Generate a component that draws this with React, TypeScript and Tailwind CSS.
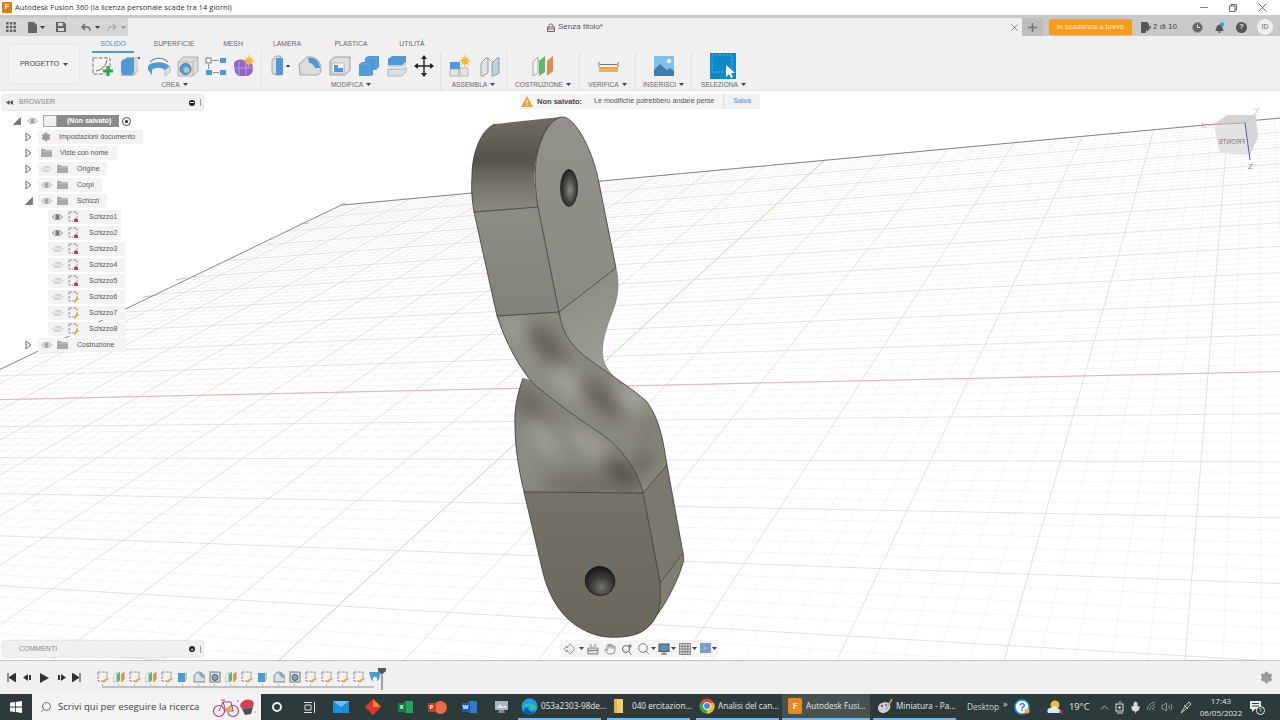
import React from "react";
import { ChevronUp, Hand, Mic, Search, Settings, Volume2, Wifi } from "lucide-react";

// ---- ground grid: a small projective map from plane (s,t) to screen
const pt = (s: number, t: number) => {
  const w = 1 + s + t;
  return `${((577 - 2298 * s + 1257 * t) / w).toFixed(1)} ${((387 + 450 * s - 236 * t) / w).toFixed(1)}`;
};
const S_MIN = -40, S_MAX = 48, T_MIN = -70, T_MAX = 55;
const DS = 0.006, DT = 0.0104;
let minorGrid = "", majorGrid = "";
for (let i = S_MIN; i <= S_MAX; i++) {
  const d = `M${pt(i * DS, T_MIN * DT)}L${pt(i * DS, T_MAX * DT)}`;
  if (i % 5 === 0) majorGrid += d;
  else minorGrid += d;
}
for (let j = T_MIN; j <= T_MAX; j++) {
  const d = `M${pt(S_MIN * DS, j * DT)}L${pt(S_MAX * DS, j * DT)}`;
  if (j % 5 === 0) majorGrid += d;
  else minorGrid += d;
}

// soft shading streaks on the twisted part: cx, cy, rx, ry, rotation, colour
const bandShade: [number, number, number, number, number, string][] = [
  [515, 330, 20, 14, 60, "#9c9b93"],
  [548, 347, 28, 11, 55, "#5f5c53"],
  [525, 362, 14, 9, 60, "#96958d"],
  [567, 383, 26, 8, 40, "#aeada5"],
  [602, 398, 28, 10, 45, "#5f5c53"],
  [632, 398, 20, 8, 45, "#b0afa7"],
  [650, 430, 14, 18, 10, "#7f7d73"],
  [640, 465, 20, 10, -40, "#6a675d"],
];
const backShade: [number, number, number, number, number, string][] = [
  [530, 405, 24, 10, 45, "#66635a"],
  [525, 462, 12, 28, 0, "#8f8e86"],
  [545, 440, 26, 8, 50, "#a6a59d"],
  [590, 445, 28, 9, 35, "#a4a39b"],
  [622, 474, 22, 11, 40, "#504d45"],
  [585, 486, 40, 7, 0, "#65625a"],
];

function Scene() {
  return (
    <svg className="absolute inset-0" width="1280" height="569" viewBox="0 91 1280 569">
      <defs>
        <linearGradient id="capSide" gradientUnits="userSpaceOnUse" x1="0" y1="118" x2="0" y2="212">
          <stop offset="0" stopColor="#6f6c64" />
          <stop offset="0.45" stopColor="#56534b" />
          <stop offset="0.72" stopColor="#78766c" />
          <stop offset="1" stopColor="#8d8b81" />
        </linearGradient>
        <linearGradient id="frontFace" gradientUnits="userSpaceOnUse" x1="0" y1="117" x2="0" y2="312">
          <stop offset="0" stopColor="#92928a" />
          <stop offset="1" stopColor="#8a8a82" />
        </linearGradient>
        <linearGradient id="flatFace" gradientUnits="userSpaceOnUse" x1="0" y1="210" x2="0" y2="316">
          <stop offset="0" stopColor="#8d8c84" />
          <stop offset="1" stopColor="#82817a" />
        </linearGradient>
        <linearGradient id="lobe" gradientUnits="userSpaceOnUse" x1="570" y1="280" x2="620" y2="380">
          <stop offset="0" stopColor="#8c8c84" />
          <stop offset="1" stopColor="#a0a098" />
        </linearGradient>
        <linearGradient id="bottomFace" gradientUnits="userSpaceOnUse" x1="0" y1="492" x2="0" y2="637">
          <stop offset="0" stopColor="#767268" />
          <stop offset="1" stopColor="#6a665b" />
        </linearGradient>
        <radialGradient id="holeTop" cx="0.55" cy="0.55" r="0.6">
          <stop offset="0" stopColor="#8a8a84" />
          <stop offset="0.5" stopColor="#4d4b46" />
          <stop offset="1" stopColor="#1b1a18" />
        </radialGradient>
        <radialGradient id="holeLow" cx="0.62" cy="0.68" r="0.7">
          <stop offset="0" stopColor="#77756f" />
          <stop offset="0.5" stopColor="#3c3b38" />
          <stop offset="1" stopColor="#161514" />
        </radialGradient>
        <filter id="soft" x="-100%" y="-100%" width="300%" height="300%">
          <feGaussianBlur stdDeviation="9" />
        </filter>
        <clipPath id="bandClip">
          <path d="M497 316L559 312C562 335 575 350 590 360C610 375 635 390 647 402C660 420 663 440 667 465L643 493C638 470 620 447 603 435C580 420 545 395 530 380C515 360 505 340 497 316Z" />
        </clipPath>
        <clipPath id="backClip">
          <path d="M523 378C517 395 514 410 515 427C515 450 520 475 524 492L643 493C638 470 620 447 603 435C580 420 545 395 530 380Z" />
        </clipPath>
      </defs>

      <path d={minorGrid} fill="none" stroke="#ebebeb" strokeWidth="0.5" />
      <path d={majorGrid} fill="none" stroke="#d6d6d6" strokeWidth="0.7" />
      <path d={`M${pt(S_MIN * DS, 0)}L${pt(S_MAX * DS, 0)}`} stroke="#eab4b4" strokeWidth="1" />
      <path d={`M${pt(0, T_MIN * DT)}L${pt(0, T_MAX * DT)}`} stroke="#bde3b5" strokeWidth="1" />
      <path d={`M${pt(S_MAX * DS, T_MIN * DT)}L${pt(S_MAX * DS, T_MAX * DT)}L${pt(S_MIN * DS, T_MAX * DT)}`} fill="none" stroke="#7d7d7d" strokeWidth="0.9" />
      <g stroke="#999" strokeWidth="0.6">
        <path d="M143 297L157 295M176 280L186 278M300 224L309 223M340 204L346 203" />
      </g>

      {/* lower back surface */}
      <path d="M523 378C517 395 514 410 515 427C515 450 520 475 524 492L643 493C638 470 620 447 603 435C580 420 545 395 530 380Z" fill="#85847b" />
      <g clipPath="url(#backClip)">
        {backShade.map(([cx, cy, rx, ry, r, c], i) => (
          <ellipse key={i} cx={cx} cy={cy} rx={rx} ry={ry} fill={c} filter="url(#soft)" transform={`rotate(${r} ${cx} ${cy})`} />
        ))}
      </g>

      {/* twist band */}
      <path d="M497 316L559 312C562 335 575 350 590 360C610 375 635 390 647 402C660 420 663 440 667 465L643 493C638 470 620 447 603 435C580 420 545 395 530 380C515 360 505 340 497 316Z" fill="#8a8980" />
      <g clipPath="url(#bandClip)">
        {bandShade.map(([cx, cy, rx, ry, r, c], i) => (
          <ellipse key={i} cx={cx} cy={cy} rx={rx} ry={ry} fill={c} filter="url(#soft)" transform={`rotate(${r} ${cx} ${cy})`} />
        ))}
      </g>

      {/* upper right lobe */}
      <path d="M559 312L616 268C620 285 618 300 610 318C604 335 600 350 604 362C608 372 615 378 622 384C612 376 600 368 590 360C575 350 562 335 559 312Z" fill="url(#lobe)" />

      {/* top piece */}
      <path d="M495 124C480 130 472 155 472 175C471 190 472 200 474 212L538 207C535 190 534 180 535 168C537 145 548 122 561 117Z" fill="url(#capSide)" />
      <path d="M561 117C575 115 592 150 598 178L616 268L559 312L538 207C534 185 535 165 537 155C541 135 550 120 561 117Z" fill="url(#frontFace)" />
      <path d="M474 212L538 207L559 312L497 316Z" fill="url(#flatFace)" />
      <ellipse cx="569" cy="188" rx="8.5" ry="18.5" fill="url(#holeTop)" stroke="#1c1b19" strokeWidth="0.7" />

      {/* bottom piece */}
      <path d="M524 492L643 493L660 582C661 600 660 608 657 615C652 625 645 631 637 634C625 638 610 638 600 636C575 630 553 612 543 573Z" fill="url(#bottomFace)" />
      <path d="M643 493L667 465L683 553L660 583Z" fill="#7b786e" />
      <path d="M683 553C684 558 684 560 683 563C678 580 668 600 657 615C660 608 661 600 660 583Z" fill="#807d72" />
      <ellipse cx="600" cy="581" rx="15" ry="14.5" fill="url(#holeLow)" stroke="#1a1917" strokeWidth="0.7" transform="rotate(20 600 581)" />

      {/* edges */}
      <g fill="none" stroke="#2a2924" strokeWidth="0.7">
        <path d="M561 117C575 115 592 150 598 178L616 268" />
        <path d="M561 117C550 120 541 135 537 155C535 165 534 185 538 207L559 312" />
        <path d="M474 212L538 207M497 316L559 312L616 268" />
        <path d="M495 124C480 130 472 155 472 175C471 190 472 200 474 212L497 316C505 340 515 360 530 380C545 395 580 420 603 435C620 447 638 470 643 493" />
        <path d="M559 312C562 335 575 350 590 360C610 375 635 390 647 402C660 420 663 440 667 465L683 553" />
        <path d="M616 268C620 285 618 300 610 318C604 335 600 350 604 362C608 372 615 378 622 384" strokeWidth="0.5" stroke="#66655c" />
        <path d="M523 378C517 395 514 410 515 427C515 450 520 475 524 492L543 573C553 612 575 630 600 636C610 638 625 638 637 634C645 631 652 625 657 615C660 608 661 600 660 582L643 493L524 492" />
        <path d="M643 493L667 465M660 583L683 553C684 558 684 560 683 563C678 580 668 600 657 615" />
      </g>

      {/* view cube */}
      <path d="M1213 125L1227 115L1256 115L1245 123Z" fill="#d2d2d2" />
      <path d="M1214 127L1245 123L1250 155L1220 153Z" fill="#e2e2e2" />
      <path d="M1245 123L1256 115L1258 137L1250 155Z" fill="#d6d6d6" />
      <text transform="translate(1245 144) scale(-1 1)" fontSize="6.5" fill="#777" fontFamily="Liberation Sans, sans-serif">FRONTE</text>
      <path d="M1208 125L1245 123" stroke="#e58f8f" strokeWidth="1" />
      <path d="M1245 123L1256 113" stroke="#9fdc98" strokeWidth="1" />
      <path d="M1245 123L1250 160" stroke="#5a5ab8" strokeWidth="1" />
      <text x="1201" y="128" fontSize="8" fill="#e58f8f" fontFamily="Liberation Sans, sans-serif">X</text>
      <text x="1254" y="113" fontSize="8" fill="#9fdc98" fontFamily="Liberation Sans, sans-serif">Y</text>
      <text x="1248" y="169" fontSize="8" fill="#7a7ac8" fontFamily="Liberation Sans, sans-serif">Z</text>
    </svg>
  );
}

// ---- ribbon icons
const Ico = ({ w = 22, h = 22, children }: { w?: number; h?: number; children: React.ReactNode }) => (
  <svg width={w} height={h} viewBox={`0 0 ${w} ${h}`} className="shrink-0">
    {children}
  </svg>
);

const SketchIcon = () => (
  <Ico>
    <path d="M2 3H19V17M2 3V19H14" fill="#f6f6f6" stroke="#777" strokeWidth="1" strokeDasharray="4 1.5" />
    <path d="M5 16C11 15 15 11 16 5" fill="none" stroke="#666" strokeWidth="1" />
    <path d="M17 11V21M12 16H22" stroke="#2fa84f" strokeWidth="3.2" />
  </Ico>
);
const ExtrudeIcon = () => (
  <Ico>
    <path d="M2 7L8 2H19V16L15 21H2Z" fill="#b5b5b5" />
    <path d="M2 7C2 5 7 3 12 3H15V17L12 20H4C2 18 2 16 2 14Z" fill="#4f9ad6" />
    <path d="M15 3L19 2V15L15 19Z" fill="#d8d8d8" />
    <circle cx="20" cy="3" r="1" fill="#333" />
  </Ico>
);
const RevolveIcon = () => (
  <Ico w={24}>
    <path d="M1 11C5 6 18 6 22 11V16L18 20V15C14 12 8 12 5 15V20L1 15Z" fill="#4f9ad6" />
    <path d="M18 15L23 11V17L18 21Z" fill="#e4e4e4" stroke="#888" strokeWidth="0.5" />
    <path d="M3 7C8 2 16 2 21 7" fill="none" stroke="#666" strokeWidth="1" />
  </Ico>
);
const HoleIcon = () => (
  <Ico>
    <path d="M1 7L6 2H21V16L16 21H1Z" fill="#dcdcdc" stroke="#999" strokeWidth="0.7" />
    <path d="M16 21V7H1M16 7L21 2" fill="none" stroke="#aaa" strokeWidth="0.7" />
    <circle cx="8.5" cy="14" r="5.5" fill="#4f9ad6" stroke="#777" />
    <circle cx="9.5" cy="15" r="3" fill="#9cc7e8" />
  </Ico>
);
const PatternIcon = () => (
  <Ico>
    <rect x="1" y="3" width="5" height="5" fill="#fff" stroke="#777" />
    <rect x="15" y="3" width="6" height="5" fill="#4f9ad6" />
    <rect x="1" y="15" width="6" height="5" fill="#4f9ad6" />
    <rect x="15" y="15" width="6" height="5" fill="#4f9ad6" />
    <path d="M7 5.5H14M3.5 9V14M8 17.5H14" stroke="#777" strokeWidth="0.8" />
  </Ico>
);
const FormIcon = () => (
  <Ico>
    <path d="M1 8C3 4 8 4 12 5L19 9C21 14 20 19 15 21H6C2 20 1 14 1 8Z" fill="#8e66c9" />
    <path d="M6 6V21M13 5V21M1 13H20" stroke="#c6a9e6" strokeWidth="0.8" />
    <circle cx="16" cy="6" r="3.5" fill="#f6b73c" />
    <path d="M16 0V12M10 6H22M12 2L20 10M20 2L12 10" stroke="#f6b73c" strokeWidth="1" />
  </Ico>
);
const PressIcon = () => (
  <Ico w={20}>
    <path d="M1 5L5 1H10V20H5L1 18Z" fill="#dcdcdc" stroke="#8a8a8a" strokeWidth="0.7" />
    <path d="M5 3H12V20H5Z" fill="#4f9ad6" />
    <path d="M15 11H19" stroke="#444" strokeWidth="1" />
    <circle cx="17" cy="11" r="1" fill="#222" />
  </Ico>
);
const FilletIcon = () => (
  <Ico w={24}>
    <path d="M1 9L9 2H14C19 3 23 8 23 13V17L20 20H2Z" fill="#dcdcdc" stroke="#888" strokeWidth="0.7" />
    <path d="M10 3H14C19 4 22 8 22 13H17C16 10 14 8 11 8Z" fill="#4f9ad6" />
  </Ico>
);
const ShellIcon = () => (
  <Ico>
    <path d="M1 6L6 2H21V15L16 20H1Z" fill="#e0e0e0" stroke="#8a8a8a" strokeWidth="0.8" />
    <path d="M3 8H15V18H3Z" fill="#fff" stroke="#8a8a8a" strokeWidth="0.6" />
    <path d="M5 10V17H14V13H9V10Z" fill="#4f9ad6" />
  </Ico>
);
const CombineIcon = () => (
  <Ico>
    <path d="M7 3L10 1H21V12L18 15H15V20L12 21H1V9L4 7H7Z" fill="#4f9ad6" />
    <path d="M18 15V3H8M12 21V9H2" fill="none" stroke="#74b3e3" strokeWidth="0.7" />
  </Ico>
);
const SplitIcon = () => (
  <Ico w={20}>
    <path d="M1 4L5 1H19V7L15 10H1Z" fill="#4f9ad6" />
    <path d="M1 11H16L19 9" fill="none" stroke="#999" strokeWidth="0.8" />
    <path d="M1 14H16L19 12V17L15 21H1Z" fill="#dedede" stroke="#999" strokeWidth="0.6" />
  </Ico>
);
const MoveIcon = () => (
  <Ico w={20}>
    <path d="M10 1V21M1 11H19" stroke="#222" strokeWidth="1.4" />
    <path d="M10 0L7 4H13ZM10 22L7 18H13ZM0 11L4 8V14ZM20 11L16 8V14Z" fill="#222" />
  </Ico>
);
const JointNewIcon = () => (
  <Ico>
    <path d="M1 7H11V14H1Z" fill="#4f9ad6" />
    <path d="M1 14H10V21H1Z" fill="#e4e4e4" stroke="#999" strokeWidth="0.6" />
    <path d="M11 13H19V21H11Z" fill="#e4e4e4" stroke="#999" strokeWidth="0.6" />
    <circle cx="16" cy="6" r="3.5" fill="#f6b73c" />
    <path d="M16 0V12M10 6H22M12 2L20 10M20 2L12 10" stroke="#f6b73c" strokeWidth="1" />
  </Ico>
);
const JointIcon = () => (
  <Ico>
    <path d="M2 8L7 3H9V18L4 21H2Z" fill="#e2e2e2" stroke="#888" strokeWidth="0.8" />
    <path d="M13 8L18 3H20V18L15 21H13Z" fill="#bdd3e3" stroke="#888" strokeWidth="0.8" />
    <path d="M9 3L14 8" stroke="#888" strokeWidth="0.7" />
  </Ico>
);
const PlaneIcon = ({ s = 22 }: { s?: number }) => (
  <svg width={s} height={s} viewBox="0 0 22 22" className="shrink-0">
    <path d="M1 7L6 2V18L1 21Z" fill="#f4f4f4" stroke="#888" strokeWidth="0.7" />
    <path d="M7 6L13 1V17L7 21Z" fill="#5cb768" />
    <path d="M15 6L21 1V16L15 21Z" fill="#e08a4f" />
  </svg>
);
const RulerIcon = () => (
  <Ico>
    <path d="M2 7V12M21 7V12M3 9.5H20" stroke="#555" strokeWidth="0.8" />
    <rect x="2" y="12" width="19" height="5" fill="#eeb544" />
    <path d="M4 12V14M7 12V14M10 12V14M13 12V14M16 12V14M19 12V14" stroke="#a77820" strokeWidth="0.6" />
  </Ico>
);
const ImageIcon = () => (
  <Ico w={20} h={20}>
    <rect width="20" height="20" fill="#7fc1ea" />
    <circle cx="15" cy="5" r="2" fill="#fff" />
    <path d="M0 20V14L6 8L13 14L16 12L20 15V20Z" fill="#3c7eb0" />
  </Ico>
);
const SelectIcon = () => (
  <Ico w={26} h={26}>
    <rect width="26" height="26" fill="#0f88c9" />
    <rect x="2" y="2" width="20" height="17" fill="none" stroke="#6cc3ea" strokeWidth="0.8" strokeDasharray="2 1.5" />
    <path d="M16 12V24L19 21L21 25L23 24L21 20H25Z" fill="#fff" />
  </Ico>
);

const Caret = ({ className = "" }: { className?: string }) => (
  <svg width="5" height="3" viewBox="0 0 5 3" className={`inline-block shrink-0 ${className}`}>
    <path d="M0 0H5L2.5 3Z" fill="#444" />
  </svg>
);

function RibbonGroup({ width, label, pad, gap, last, children }: { width: string; label: string; pad: string; gap: string; last?: boolean; children: React.ReactNode }) {
  return (
    <div className={`flex flex-col h-[39px] ${width} ${last ? "" : "border-r border-[#e0e0e0]"}`}>
      <div className={`flex items-center h-[27px] ${pad} ${gap}`}>{children}</div>
      <div className="flex items-center justify-center gap-[3px] h-[11px] text-[6.6px] text-[#666]">
        {label}
        <Caret />
      </div>
    </div>
  );
}

// ---- browser tree
const Eye = ({ off, dark }: { off?: boolean; dark?: boolean }) => {
  const c = dark ? "#777" : off ? "#c4c4c4" : "#a4a4a4";
  return (
    <svg width="11" height="8" viewBox="0 0 11 8" className="shrink-0">
      <path d="M0.5 4C3 0.7 8 0.7 10.5 4C8 7.3 3 7.3 0.5 4Z" fill={off ? "none" : "#f2f2f2"} stroke={c} strokeWidth="0.9" />
      <circle cx="5.5" cy="4" r="1.9" fill={off ? "none" : c} stroke={c} strokeWidth="0.7" />
      {off && <path d="M2 7L9 1" stroke={c} strokeWidth="0.6" />}
    </svg>
  );
};
const Folder = () => (
  <svg width="11" height="8" viewBox="0 0 11 8" className="shrink-0">
    <path d="M0 0H4L5 1H11V8H0Z" fill="#a9a9a9" />
    <path d="M0 2H11" stroke="#dadada" strokeWidth="0.6" />
  </svg>
);
const ArrowRight = () => (
  <svg width="7" height="10" viewBox="0 0 7 10" className="shrink-0">
    <path d="M1 1L6 5L1 9Z" fill="#fff" stroke="#555" strokeWidth="0.9" />
  </svg>
);
const ArrowOpen = () => (
  <svg width="8" height="8" viewBox="0 0 8 8" className="shrink-0">
    <path d="M7.5 0.5V7.5H0.5Z" fill="#777" stroke="#444" strokeWidth="0.5" />
  </svg>
);
const SketchNode = ({ edit }: { edit?: boolean }) => (
  <svg width="11" height="12" viewBox="0 0 11 12" className="shrink-0">
    <path d="M1 1H9V7M1 1V10H5" fill="none" stroke="#777" strokeWidth="0.8" strokeDasharray="3 1" />
    {edit ? <path d="M6 11L10 7" stroke="#e6a23c" strokeWidth="2" /> : <path d="M6 11V8.5L8 7L10 8.5V11Z" fill="#c63d45" />}
  </svg>
);

function TreeFolder({ label, open, eyeOff, width }: { label: string; open?: boolean; eyeOff?: boolean; width: string }) {
  return (
    <div className="flex items-center h-4 pl-[25px]">
      <div className="flex w-[13px] justify-start">{open ? <ArrowOpen /> : <ArrowRight />}</div>
      <div className={`flex items-center h-[14px] bg-[#f3f3f3] pl-[3px] gap-[5px] ${width}`}>
        <Eye off={eyeOff} />
        <Folder />
        <span className="ml-[4px] text-[7px] text-[#555]">{label}</span>
      </div>
    </div>
  );
}
function TreePlain({ label, icon, width }: { label: string; icon: React.ReactNode; width: string }) {
  return (
    <div className="flex items-center h-4 pl-[25px]">
      <div className="flex w-[13px] justify-start"><ArrowRight /></div>
      <div className={`flex items-center h-[14px] bg-[#f3f3f3] pl-[3px] gap-[8px] ${width}`}>
        {icon}
        <span className="text-[7px] text-[#555] whitespace-nowrap">{label}</span>
      </div>
    </div>
  );
}
function SketchRow({ n, visible, edit, width }: { n: number; visible?: boolean; edit?: boolean; width: string }) {
  return (
    <div className="flex items-center h-4 pl-[48px]">
      <div className={`flex items-center h-[14px] bg-[#f3f3f3] pl-[4px] gap-[5px] ${width}`}>
        <Eye off={!visible} dark={visible} />
        <SketchNode edit={edit} />
        <span className="ml-[5px] text-[7px] text-[#555]">Schizzo{n}</span>
      </div>
    </div>
  );
}

function BrowserPanel() {
  return (
    <div className="absolute left-[3px] top-[4px] w-[200px]">
      <div className="flex items-center h-[15px] bg-[#f0f0f0] shadow-[0_0_2px_#bbb] pl-[3px] pr-[2px]">
        <svg width="7" height="5" viewBox="0 0 7 5" className="shrink-0"><path d="M3.5 0V5L0 2.5ZM7 0V5L3.5 2.5Z" fill="#555" /></svg>
        <span className="ml-[6px] text-[7px] text-[#888]">BROWSER</span>
        <span className="ml-auto w-[6px] h-[6px] rounded-full bg-[#222] flex items-center justify-center">
          <span className="w-[4px] h-px bg-white" />
        </span>
        <span className="ml-[5px] w-px h-[7px] bg-[#999]" />
      </div>
      <div className="-ml-[3px] mt-[3px]">
        <div className="flex items-center h-4 pl-[13px]">
          <div className="w-[14px]"><ArrowOpen /></div>
          <div className="w-[16px]"><Eye /></div>
          <div className="flex items-center w-[76px] h-[12px] bg-[#8b8b8b]">
            <span className="flex items-center justify-center w-[14px] h-[12px] bg-[#f0f0f0] border border-[#aaa]" />
            <span className="ml-[10px] text-[7px] font-bold text-white whitespace-nowrap">(Non salvato)</span>
          </div>
          <span className="ml-[3px] flex items-center justify-center w-[9px] h-[9px] rounded-full border border-[#444]">
            <span className="w-[3px] h-[3px] rounded-full bg-[#222]" />
          </span>
        </div>
        <TreePlain label="Impostazioni documento" width="w-[105px]" icon={<Settings size={10} className="text-[#999]" fill="#999" />} />
        <TreePlain label="Viste con nome" width="w-[79px]" icon={<Folder />} />
        <TreeFolder label="Origine" eyeOff width="w-[69px]" />
        <TreeFolder label="Corpi" width="w-[64px]" />
        <TreeFolder label="Schizzi" open width="w-[69px]" />
        <SketchRow n={1} visible width="w-[73px]" />
        <SketchRow n={2} visible width="w-[73px]" />
        <SketchRow n={3} width="w-[77px]" />
        <SketchRow n={4} width="w-[77px]" />
        <SketchRow n={5} width="w-[77px]" />
        <SketchRow n={6} edit width="w-[77px]" />
        <SketchRow n={7} edit width="w-[77px]" />
        <SketchRow n={8} edit width="w-[77px]" />
        <TreeFolder label="Costruzione" width="w-[88px]" />
      </div>
    </div>
  );
}

function NavBar() {
  return (
    <div className="absolute left-[560px] bottom-[3px] flex items-center w-[158px] h-[17px] bg-[#f3f3f3]/90 pl-[3px] text-[#666]">
      <svg width="14" height="12" viewBox="0 0 14 12" className="shrink-0">
        <path d="M1 6L4 3V5L7 1L12 6L7 11L4 7V9Z" fill="#eee" stroke="#777" strokeWidth="0.7" />
      </svg>
      <Caret className="ml-[2px]" />
      <svg width="12" height="12" viewBox="0 0 12 12" className="ml-[3px] shrink-0">
        <path d="M1 5H11V11H1Z" fill="#ddd" stroke="#666" strokeWidth="0.8" />
        <path d="M1 7.5H11M3 1L5 4M9 1L7 4" stroke="#666" strokeWidth="0.8" />
      </svg>
      <Hand size={12} strokeWidth={1.4} className="ml-[5px] shrink-0" />
      <svg width="12" height="12" viewBox="0 0 12 12" className="ml-[5px] shrink-0">
        <circle cx="5" cy="6" r="3.5" fill="none" stroke="#666" />
        <path d="M7.5 8.5L10.5 11.5M9 1V5M7 3H11" stroke="#666" />
      </svg>
      <Search size={13} strokeWidth={1.5} strokeDasharray="2 1" className="ml-[4px] shrink-0" />
      <Caret className="ml-[1px]" />
      <svg width="12" height="12" viewBox="0 0 12 12" className="ml-[2px] shrink-0">
        <rect x="1" y="1" width="10" height="7.5" fill="#5b8db8" stroke="#555" />
        <path d="M3 11H9M6 9V11" stroke="#555" />
      </svg>
      <Caret className="ml-[1px]" />
      <svg width="12" height="12" viewBox="0 0 12 12" className="ml-[3px] shrink-0">
        <path d="M0.5 .5H11.5V11.5H.5ZM.5 3.2H11.5M.5 6H11.5M.5 8.8H11.5M3.2 .5V11.5M6 .5V11.5M8.8 .5V11.5" fill="#ddd" stroke="#666" strokeWidth="0.7" />
      </svg>
      <Caret className="ml-[1px]" />
      <svg width="11" height="11" viewBox="0 0 11 11" className="ml-[3px] shrink-0">
        <rect width="11" height="10" fill="#7f9cc4" />
        <circle cx="5.5" cy="5" r="1.5" fill="#a6bddb" />
      </svg>
      <Caret className="ml-[1px]" />
    </div>
  );
}

// ---- timeline
const TlSketch = () => (
  <svg width="12" height="12" viewBox="0 0 12 12">
    <path d="M1 1H10V6M1 1V10H6" fill="none" stroke="#777" strokeWidth="0.8" strokeDasharray="3 1" />
    <path d="M6 11L11 7" stroke="#e6a23c" strokeWidth="2" />
  </svg>
);
const TlExtrude = () => (
  <svg width="12" height="12" viewBox="0 0 12 12">
    <path d="M1 2H8V11H1Z" fill="#4f9ad6" />
    <path d="M8 2L10 1V9L8 11Z" fill="#c9c9c9" />
  </svg>
);
const TlFillet = () => (
  <svg width="12" height="12" viewBox="0 0 12 12">
    <path d="M1 5L4 1H7C10 2 12 5 12 8V11H1Z" fill="#dedede" stroke="#777" strokeWidth="0.8" />
    <path d="M5 1.5H7C9.5 2.5 11 5 11 7L8 6Z" fill="#6aaade" />
  </svg>
);
const TlHole = () => (
  <svg width="12" height="12" viewBox="0 0 12 12">
    <rect x="1" y="1" width="10" height="10" fill="#dedede" stroke="#777" />
    <circle cx="6" cy="6.5" r="3" fill="#6aaade" stroke="#555" />
  </svg>
);
const TlLoft = () => (
  <svg width="12" height="12" viewBox="0 0 12 12">
    <path d="M0 1H12L10 8C9 11 3 11 2 8Z" fill="#4f9ad6" />
    <circle cx="6" cy="8" r="2.2" fill="#fff" />
  </svg>
);
const timeline = ["s", "p", "s", "p", "s", "e", "f", "h", "p", "s", "e", "f", "h", "s", "s", "s", "s", "l"];

function Timeline() {
  return (
    <div className="flex items-start h-[34px] bg-[#f0f0f0] border-t border-[#c4c4c4] relative">
      <div className="flex items-center h-[33px] pl-[7px] gap-[6px] w-[95px]">
        <svg width="9" height="9" viewBox="0 0 9 9"><path d="M1 0V9M9 0V9L2 4.5Z" stroke="#333" fill="#333" /></svg>
        <svg width="10" height="9" viewBox="0 0 10 9" className="ml-[1px]"><path d="M5 1V8L0 4.5ZM6 2H8V7H6Z" fill="#333" /></svg>
        <svg width="9" height="10" viewBox="0 0 9 10" className="ml-[1px]"><path d="M0 0V10L9 5Z" fill="#333" /></svg>
        <svg width="10" height="9" viewBox="0 0 10 9" className="ml-[1px]"><path d="M5 1V8L10 4.5ZM2 2H4V7H2Z" fill="#333" /></svg>
        <svg width="9" height="9" viewBox="0 0 9 9"><path d="M8 0V9M0 0V9L7 4.5Z" stroke="#333" fill="#333" /></svg>
      </div>
      <div className="flex flex-col pt-[10px]">
        <div className="flex">
          {timeline.map((k, i) => (
            <div key={i} className="flex justify-center w-[16px]">
              {k === "s" && <TlSketch />}
              {k === "p" && <PlaneIcon s={12} />}
              {k === "e" && <TlExtrude />}
              {k === "f" && <TlFillet />}
              {k === "h" && <TlHole />}
              {k === "l" && <TlLoft />}
            </div>
          ))}
        </div>
        <div className="flex ml-[7px] mt-px h-[4px] w-[272px] border-b-2 border-[#c2c2c2]">
          {timeline.slice(1).map((_, i) => (
            <div key={i} className="w-[16px] h-[3px] border-l border-[#bbb]" />
          ))}
        </div>
      </div>
      <svg width="8" height="22" viewBox="0 0 8 22" className="mt-[7px] -ml-[5px] shrink-0">
        <path d="M0 0H8V3L4.5 6V22H3.5V6L0 3Z" fill="#555" />
      </svg>
      <Settings size={13} className="ml-auto mr-[7px] mt-[10px] text-[#999]" fill="#999" />
    </div>
  );
}

// ---- taskbar
function Task({ width, label, icon, active }: { width: string; label: string; icon: React.ReactNode; active?: boolean }) {
  return (
    <div className={`flex items-center gap-[3px] h-[26px] pl-[3px] border-b-2 border-[#77b8ea] ${width} ${active ? "bg-[#46524f]" : ""}`}>
      {icon}
      <span className="text-[8.2px] text-[#e8e8e8] whitespace-nowrap">{label}</span>
    </div>
  );
}
const Cell = ({ children }: { children: React.ReactNode }) => (
  <div className="flex items-center justify-center w-[32px] h-[26px]">{children}</div>
);

function Taskbar() {
  return (
    <div className="flex items-center h-[26px] bg-[#2d3a3a] font-['Open_Sans',sans-serif]">
      <div className="flex items-center justify-center w-[32px] h-[26px]">
        <svg width="12" height="12" viewBox="0 0 12 12">
          <path d="M0 1.8L5 1V5.6H0ZM5.8 .9L12 0V5.6H5.8ZM0 6.4H5V11L0 10.2ZM5.8 6.4H12V12L5.8 11.1Z" fill="#fff" />
        </svg>
      </div>
      <div className="flex items-center w-[229px] h-[26px] bg-[#f3f3f3] pl-[8px] relative">
        <Search size={12} strokeWidth={1.3} className="text-[#333] -scale-x-100" />
        <span className="ml-[6px] text-[9.6px] text-[#444] whitespace-nowrap">Scrivi qui per eseguire la ricerca</span>
        <svg width="46" height="22" viewBox="0 0 46 22" className="absolute left-[180px] top-[2px]">
          <circle cx="7" cy="15" r="5.5" fill="none" stroke="#a0417c" strokeWidth="1.2" />
          <circle cx="21" cy="15" r="5.5" fill="none" stroke="#a0417c" strokeWidth="1.2" />
          <path d="M7 15L11 6H19L21 15M11 6L14 15H21M9 4H13" fill="none" stroke="#a0417c" strokeWidth="1" />
          <path d="M13 12L19 10L20 15L15 16Z" fill="#f2a65a" />
          <path d="M28 10C29 3 39 1 42 7L41 11L30 13Z" fill="#d6404c" />
          <path d="M30 13L41 11L39 18L33 19Z" fill="#49525a" />
          <circle cx="26" cy="5" r="1" fill="#d17ae0" />
          <circle cx="43" cy="16" r="1" fill="#f0c24b" />
        </svg>
      </div>
      <Cell><span className="w-[10px] h-[10px] rounded-full border-2 border-[#eee]" /></Cell>
      <Cell>
        <svg width="11" height="11" viewBox="0 0 11 11"><path d="M0 .5H8M0 10.5H8M10.5 0V11M1 3H7V8H1Z" fill="none" stroke="#ddd" /></svg>
      </Cell>
      <Cell>
        <svg width="16" height="12" viewBox="0 0 16 12"><rect width="16" height="12" fill="#1e8ed6" /><path d="M0 0L8 6L16 0Z" fill="#6cc0f0" /></svg>
      </Cell>
      <Cell>
        <svg width="16" height="16" viewBox="0 0 16 16"><path d="M8 0L16 8L8 16L0 8Z" fill="#e2332d" /><path d="M8 0L16 8L8 8Z" fill="#f58a1f" /></svg>
      </Cell>
      <Cell>
        <div className="flex items-center">
          <span className="flex items-center justify-center w-[8px] h-[9px] bg-[#107c41] text-[6px] font-bold text-white z-10">X</span>
          <span className="-ml-[1px] w-[8px] h-[12px] bg-[#21a366]" />
        </div>
      </Cell>
      <Cell>
        <div className="flex items-center">
          <span className="flex items-center justify-center w-[8px] h-[9px] bg-[#c43e1c] text-[6px] font-bold text-white z-10">P</span>
          <span className="-ml-[2px] w-[13px] h-[13px] rounded-full bg-[#ed6c47]" />
        </div>
      </Cell>
      <Cell>
        <div className="flex items-center">
          <span className="flex items-center justify-center w-[8px] h-[9px] bg-[#185abd] text-[6px] font-bold text-white z-10">W</span>
          <span className="-ml-[1px] w-[8px] h-[12px] bg-[#2b7cd3]" />
        </div>
      </Cell>
      <Cell>
        <svg width="15" height="14" viewBox="0 0 15 14"><rect x="1" y="1" width="13" height="9" fill="#a9b4bb" /><path d="M3 8L6 4L9 7L11 5L13 8Z" fill="#dfe5e8" /><path d="M4 13H11L10 10H5Z" fill="#888" /></svg>
      </Cell>
      <div className="flex items-center gap-[6px] ml-px">
        <Task width="w-[83px]" label="053a2303-98de..." icon={
          <svg width="17" height="17" viewBox="0 0 17 17" className="shrink-0"><circle cx="8.5" cy="8.5" r="8" fill="#1b9de2" /><path d="M1 11C3 5 10 4 15 8C16 11 13 13 10 12C8 11 9 9 10 9C7 7 3 8 1 11Z" fill="#35c1a8" /><path d="M4 15C2 12 4 9 7 10C7 13 11 15 14 13C11 17 6 17 4 15Z" fill="#0c59a4" /></svg>
        } />
        <Task width="w-[83px]" label="040 ercitazion..." icon={
          <svg width="19" height="14" viewBox="0 0 19 14" className="shrink-0"><path d="M4 0H13V14H4Z" fill="#f2ce6a" /><path d="M4 0L7 1V14H4Z" fill="#e3b23f" /></svg>
        } />
      </div>
      <div className="flex items-center ml-[6px]">
        <Task width="w-[83px]" label="Analisi del can..." icon={
          <svg width="16" height="16" viewBox="0 0 16 16" className="shrink-0"><circle cx="8" cy="8" r="7.5" fill="#e94235" /><path d="M8 8L1.5 4.5A7.5 7.5 0 0 0 8 15.5Z" fill="#34a853" /><path d="M8 8V15.5A7.5 7.5 0 0 0 15 5H8Z" fill="#fbbc04" /><circle cx="8" cy="8" r="3.6" fill="#4285f4" stroke="#fff" /></svg>
        } />
        <div className="ml-[3px]">
          <Task width="w-[88px]" active label="Autodesk Fusi..." icon={
            <span className="flex items-center justify-center w-[14px] h-[16px] ml-[3px] mr-[1px] rounded-[2px] bg-[#ef8423] text-[9px] font-bold text-white shrink-0">F</span>
          } />
        </div>
        <div className="ml-[3px]">
          <Task width="w-[83px]" label="Miniatura - Pa..." icon={
            <svg width="16" height="15" viewBox="0 0 16 15" className="shrink-0 ml-[1px]"><path d="M1 9C1 4 8 2 12 4C15 6 13 13 7 14C3 14 1 12 1 9Z" fill="#c9d3da" /><circle cx="5" cy="7" r="1.3" fill="#d6404c" /><circle cx="9" cy="6" r="1.3" fill="#4285f4" /><path d="M9 11L15 0" stroke="#d9a860" strokeWidth="1.5" /></svg>
          } />
        </div>
      </div>
      <span className="ml-[11px] w-[36px] text-[8.3px] text-[#cfcfcf]">Desktop</span>
      <span className="w-[11px] mb-[8px] text-[9px] leading-none text-[#ddd]">»</span>
      <svg width="16" height="16" viewBox="0 0 16 16" className="shrink-0">
        <circle cx="8" cy="8" r="7" fill="#fff" stroke="#1b9de2" strokeWidth="1.6" />
        <text x="8" y="12" fontSize="11" fontWeight="700" textAnchor="middle" fill="#1b77c9" fontFamily="Liberation Sans, sans-serif">?</text>
        <circle cx="13" cy="12" r="2.5" fill="#f0b232" />
      </svg>
      <svg width="16" height="14" viewBox="0 0 16 14" className="ml-[17px] shrink-0">
        <circle cx="8" cy="5" r="4.5" fill="#f5b93e" />
        <path d="M1 13C-1 10 2 7 4 8C6 5 11 6 11 9C14 9 15 12 14 13Z" fill="#dbe7f2" />
        <circle cx="14" cy="12" r="1.8" fill="#d8344a" />
      </svg>
      <span className="ml-[6px] w-[20px] text-[9.4px] text-[#e6e6e6] whitespace-nowrap">19°C</span>
      <ChevronUp size={13} className="ml-[9px] shrink-0 text-[#e0e0e0]" strokeWidth={1.3} />
      <svg width="10" height="13" viewBox="0 0 10 13" className="ml-[4px] shrink-0">
        <rect x="1" y="3" width="7" height="7" fill="none" stroke="#ddd" />
        <circle cx="4.5" cy="6.5" r="1.3" fill="#ddd" />
        <path d="M2 12H8M4 1H6" stroke="#ddd" />
      </svg>
      <Mic size={13} className="ml-[4px] shrink-0 text-[#ddd]" fill="#ddd" strokeWidth={1.2} />
      <Wifi size={12} className="ml-[4px] shrink-0 text-[#bbb] -rotate-45" strokeWidth={1.3} />
      <Volume2 size={12} className="ml-[3px] shrink-0 text-[#ddd]" strokeWidth={1.2} />
      <svg width="12" height="13" viewBox="0 0 12 13" className="ml-[7px] shrink-0">
        <path d="M1 12C3 8 6 4 9 1L11 3C8 6 5 9 1 12ZM4 4L8 8" fill="none" stroke="#ddd" strokeWidth="0.9" />
      </svg>
      <div className="flex flex-col items-center ml-[8px] w-[42px] text-[8px] leading-[12px] text-[#e2e2e2] whitespace-nowrap">
        <span>17:43</span>
        <span>06/05/2022</span>
      </div>
      <div className="relative ml-[8px]">
        <svg width="14" height="13" viewBox="0 0 14 13" className="shrink-0">
          <path d="M0 0H11V8H5L2 11V8H0Z" fill="#eee" />
          <path d="M2 2.5H9M2 5H9" stroke="#2d3a3a" />
        </svg>
        <span className="absolute left-[6px] top-[5px] flex items-center justify-center w-[9px] h-[9px] rounded-full border border-[#eee] bg-[#2d3a3a] text-[6px] leading-none text-white">1</span>
      </div>
    </div>
  );
}

export default function App() {
  return (
    <div className="flex flex-col w-[1280px] h-[720px] overflow-hidden bg-white font-['Liberation_Sans',sans-serif]">
      {/* window title */}
      <div className="flex items-center h-[15px] bg-white pl-[2px]">
        <span className="flex items-center justify-center w-[10px] h-[11px] rounded-[1px] bg-[#e8791f] text-[7px] font-bold text-white">F</span>
        <span className="ml-[3px] text-[7.6px] text-[#333] font-['Open_Sans',sans-serif] whitespace-nowrap">
          Autodesk Fusion 360 (la licenza personale scade tra 14 giorni)
        </span>
        <div className="ml-auto flex items-center gap-[21px] pr-[13px] text-[#555]">
          <span className="w-[8px] h-px bg-[#888]" />
          <svg width="8" height="8" viewBox="0 0 8 8"><path d="M.5 2H6V7.5H.5ZM2 2V.5H7.5V6H6" fill="none" stroke="#444" strokeWidth="0.8" /></svg>
          <svg width="9" height="9" viewBox="0 0 9 9"><path d="M.5 .5L8.5 8.5M8.5 .5L.5 8.5" stroke="#444" strokeWidth="0.8" /></svg>
        </div>
      </div>

      {/* tab strip */}
      <div className="flex h-[21px] bg-[#c9c9c9] pt-[3px]">
        <div className="flex items-center w-[128px] h-[18px] bg-[#d6d6d6] pl-[6px]">
          <svg width="10" height="10" viewBox="0 0 10 10">
            <path d="M0 0H2.5V2.5H0ZM3.7 0H6.2V2.5H3.7ZM7.4 0H10V2.5H7.4ZM0 3.7H2.5V6.2H0ZM3.7 3.7H6.2V6.2H3.7ZM7.4 3.7H10V6.2H7.4ZM0 7.4H2.5V10H0ZM3.7 7.4H6.2V10H3.7ZM7.4 7.4H10V10H7.4Z" fill="#666" />
          </svg>
          <svg width="9" height="11" viewBox="0 0 9 11" className="ml-[12px]"><path d="M0 0H6L9 3V11H0Z" fill="#666" /></svg>
          <Caret className="ml-[3px]" />
          <svg width="10" height="10" viewBox="0 0 10 10" className="ml-[11px]"><path d="M0 0H8L10 2V10H0Z" fill="#666" /><rect x="2" y="1" width="5" height="3" fill="#d6d6d6" /><rect x="2" y="6" width="6" height="3" fill="#d6d6d6" /></svg>
          <svg width="10" height="9" viewBox="0 0 10 9" className="ml-[15px]"><path d="M4 1L1 4L4 7M1 4H6C8 4 9 5.5 9 8" fill="none" stroke="#666" strokeWidth="1.3" /></svg>
          <Caret className="ml-[4px]" />
          <svg width="10" height="9" viewBox="0 0 10 9" className="ml-[7px]"><path d="M6 1L9 4L6 7M9 4H4C2 4 1 5.5 1 8" fill="none" stroke="#aaa" strokeWidth="1.3" /></svg>
          <Caret className="ml-[4px] opacity-40" />
        </div>
        <div className="relative flex items-center justify-center w-[894px] h-[18px] bg-[#f0f0f0] pl-[1px]">
          <svg width="8" height="9" viewBox="0 0 8 9" className="mr-[3px] -ml-[1px]"><path d="M2 4V2.5C2 .5 6 .5 6 2.5V4" fill="none" stroke="#666" /><path d="M.5 4H7.5V8.5H.5Z" fill="#eee" stroke="#666" /><path d="M.5 6H7.5" stroke="#666" /></svg>
          <span className="text-[8px] text-[#555]">Senza titolo*</span>
          <svg width="7" height="7" viewBox="0 0 7 7" className="absolute right-[4px] top-[6px]"><path d="M.5 .5L6.5 6.5M6.5 .5L.5 6.5" stroke="#666" strokeWidth="0.8" /></svg>
        </div>
        <div className="flex items-center w-[258px] h-[18px]">
          <div className="flex items-center justify-center w-[21px] h-[18px] bg-[#bdbdbd]">
            <svg width="9" height="9" viewBox="0 0 9 9"><path d="M4.5 0V9M0 4.5H9" stroke="#777" strokeWidth="1.6" /></svg>
          </div>
          <div className="ml-[6px] flex items-center justify-center w-[83px] h-[16px] rounded-[2px] bg-[#f99b1c] text-[7.5px] text-[#fdeccd] whitespace-nowrap">
            In scadenza a breve
          </div>
          <svg width="10" height="11" viewBox="0 0 10 11" className="ml-[9px]"><path d="M0 0H6L8 2V5L5 9V11H0Z" fill="#555" /><path d="M6 9L10 4" stroke="#555" strokeWidth="1.5" /></svg>
          <span className="ml-[2px] text-[8px] text-[#444] whitespace-nowrap">2 di 10</span>
          <svg width="11" height="11" viewBox="0 0 11 11" className="ml-[15px]"><circle cx="5.5" cy="5.5" r="5" fill="#666" stroke="#999" /><path d="M5.5 2.5V5.5H8" fill="none" stroke="#ddd" /></svg>
          <svg width="11" height="11" viewBox="0 0 11 11" className="ml-[11px]"><path d="M1 9C2.5 8 2 3 5.5 2.5C9 3 8.5 8 10 9Z" fill="#555" /><circle cx="5.5" cy="10" r="1" fill="#555" /><circle cx="8" cy="2.5" r="2" fill="#1b9de2" /></svg>
          <span className="ml-[11px] flex items-center justify-center w-[11px] h-[11px] rounded-full bg-[#555] text-[8px] font-bold text-[#ddd]">?</span>
          <span className="ml-[10px] flex items-center justify-center w-[16px] h-[16px] rounded-full bg-[#efefef] text-[7px] text-[#666]">ID</span>
        </div>
      </div>

      {/* ribbon */}
      <div className="flex h-[55px] bg-[#f0f0f0] border-b border-[#e4e4e4]">
        <div className="flex items-center justify-center gap-[4px] w-[72px] h-[40px] ml-[8px] mt-[8px] bg-[#f2f2f2] border border-[#e6e6e6] text-[7px] text-[#444]">
          PROGETTO
          <Caret />
        </div>
        <div className="flex flex-col ml-[8px]">
          <div className="flex h-[16px] text-[6.8px] text-[#666]">
            <div className="flex items-end justify-center w-[42px] h-[17px] pb-[2px] ml-[4px] border-b-2 border-[#4a9fd8] text-[#3d8fc8]">SOLIDO</div>
            <div className="flex justify-center items-center w-[80px]">SUPERFICIE</div>
            <div className="flex justify-center items-center w-[38px]">MESH</div>
            <div className="flex justify-center items-center w-[70px]">LAMERA</div>
            <div className="flex justify-center items-center w-[58px]">PLASTICA</div>
            <div className="flex justify-center items-center w-[64px]">UTILITÀ</div>
          </div>
          <div className="flex">
            <RibbonGroup width="w-[174px]" label="CREA" pad="pl-[3px]" gap="gap-[6px]">
              <SketchIcon /><ExtrudeIcon /><RevolveIcon /><HoleIcon /><PatternIcon /><FormIcon />
            </RibbonGroup>
            <RibbonGroup width="w-[179px]" label="MODIFICA" pad="pl-[9px]" gap="gap-[7px]">
              <PressIcon /><FilletIcon /><ShellIcon /><CombineIcon /><SplitIcon /><MoveIcon />
            </RibbonGroup>
            <RibbonGroup width="w-[66px]" label="ASSEMBLA" pad="pl-[8px]" gap="gap-[8px]">
              <JointNewIcon /><JointIcon />
            </RibbonGroup>
            <RibbonGroup width="w-[73px]" label="COSTRUZIONE" pad="pl-[25px]" gap="">
              <PlaneIcon />
            </RibbonGroup>
            <RibbonGroup width="w-[56px]" label="VERIFICA" pad="pl-[17px]" gap="">
              <RulerIcon />
            </RibbonGroup>
            <RibbonGroup width="w-[56px]" label="INSERISCI" pad="pl-[18px]" gap="">
              <ImageIcon />
            </RibbonGroup>
            <RibbonGroup width="w-[63px]" label="SELEZIONA" pad="pl-[18px]" gap="" last>
              <SelectIcon />
            </RibbonGroup>
          </div>
        </div>
      </div>

      {/* viewport */}
      <div className="relative flex-1 overflow-hidden bg-white">
        <Scene />
        <BrowserPanel />
        <div className="absolute left-[520px] top-[3px] flex items-center w-[240px] h-[15px] bg-[#f4f4f4] text-[7.1px] pl-[1px]">
          <svg width="12" height="11" viewBox="0 0 12 11"><path d="M6 0L12 11H0Z" fill="#eda23c" /><path d="M6 4V7.5M6 8.5V9.7" stroke="#fff" /></svg>
          <span className="ml-[4px] font-bold text-[#444] text-[7.5px]">Non salvato:</span>
          <span className="ml-[12px] text-[#555] whitespace-nowrap">Le modifiche potrebbero andare perse</span>
          <span className="ml-[9px] flex items-center justify-center flex-1 h-[15px] bg-[#eef2f5] border-l border-[#ddd] text-[#4a88b5]">Salva</span>
        </div>
        <div className="absolute left-[3px] bottom-[3px] flex items-center w-[200px] h-[16px] bg-[#f0f0f0] shadow-[0_0_2px_#bbb] pl-[16px] pr-[2px]">
          <span className="text-[7px] text-[#888]">COMMENTI</span>
          <span className="ml-auto flex items-center justify-center w-[6px] h-[6px] rounded-full bg-[#222] text-[6px] leading-none text-white">+</span>
          <span className="ml-[5px] w-px h-[7px] bg-[#999]" />
        </div>
        <NavBar />
      </div>

      <Timeline />
      <Taskbar />
    </div>
  );
}
